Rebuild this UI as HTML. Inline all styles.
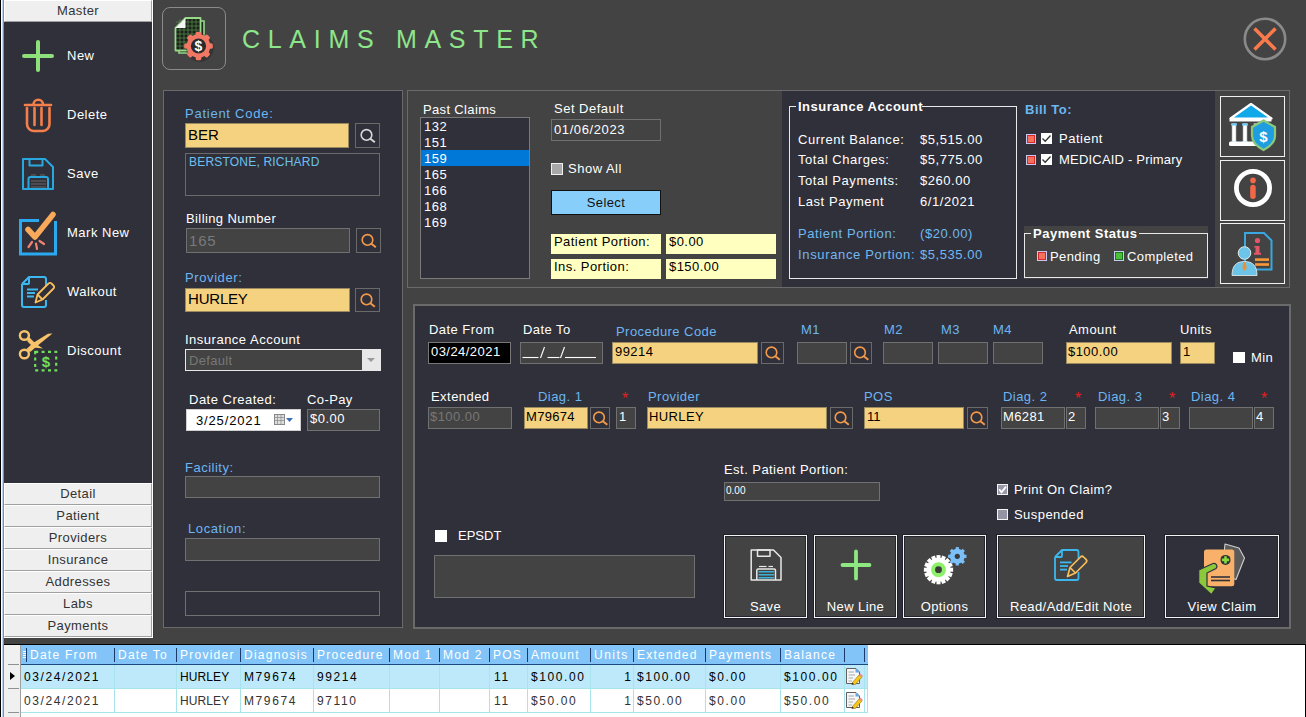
<!DOCTYPE html><html><head><meta charset="utf-8"><style>
html,body{margin:0;padding:0;}
body{width:1306px;height:717px;overflow:hidden;background:#434343;position:relative;font-family:"Liberation Sans",sans-serif;}
.a{position:absolute;box-sizing:border-box;}
.t{white-space:nowrap;}
</style></head><body>
<div class="a" style="left:0px;top:0px;width:1px;height:717px;background:#000;"></div>
<div class="a" style="left:1px;top:0px;width:1px;height:717px;background:#fdfdfd;"></div>
<div class="a" style="left:2px;top:0px;width:1px;height:717px;background:#bcd4ee;"></div>
<div class="a" style="left:3px;top:0px;width:1px;height:717px;background:#8c8c8c;"></div>
<div class="a" style="left:4px;top:0px;width:148px;height:22px;background:#efefef;border-top:1px solid #fff;border-left:1px solid #fff;border-right:1px solid #a0a0a0;border-bottom:1px solid #a0a0a0;"></div>
<div class="a t" style="left:4px;top:4px;font-size:13px;line-height:13px;color:#333;font-family:'Liberation Sans',sans-serif;letter-spacing:0.4px;width:148px;text-align:center;">Master</div>
<div class="a" style="left:4px;top:22px;width:148px;height:461px;background:#30303a;"></div>
<div class="a" style="left:152px;top:0px;width:1px;height:638px;background:#fff;"></div>
<div class="a" style="left:153px;top:0px;width:1px;height:638px;background:#3a3a3a;"></div>
<div class="a" style="left:4px;top:483px;width:148px;height:22px;background:#efefef;border-top:1px solid #fff;border-left:1px solid #fff;border-right:1px solid #a0a0a0;border-bottom:1px solid #a0a0a0;"></div>
<div class="a t" style="left:4px;top:487px;font-size:13px;line-height:13px;color:#333;font-family:'Liberation Sans',sans-serif;letter-spacing:0.4px;width:148px;text-align:center;">Detail</div>
<div class="a" style="left:4px;top:505px;width:148px;height:22px;background:#efefef;border-top:1px solid #fff;border-left:1px solid #fff;border-right:1px solid #a0a0a0;border-bottom:1px solid #a0a0a0;"></div>
<div class="a t" style="left:4px;top:509px;font-size:13px;line-height:13px;color:#333;font-family:'Liberation Sans',sans-serif;letter-spacing:0.4px;width:148px;text-align:center;">Patient</div>
<div class="a" style="left:4px;top:527px;width:148px;height:22px;background:#efefef;border-top:1px solid #fff;border-left:1px solid #fff;border-right:1px solid #a0a0a0;border-bottom:1px solid #a0a0a0;"></div>
<div class="a t" style="left:4px;top:531px;font-size:13px;line-height:13px;color:#333;font-family:'Liberation Sans',sans-serif;letter-spacing:0.4px;width:148px;text-align:center;">Providers</div>
<div class="a" style="left:4px;top:549px;width:148px;height:22px;background:#efefef;border-top:1px solid #fff;border-left:1px solid #fff;border-right:1px solid #a0a0a0;border-bottom:1px solid #a0a0a0;"></div>
<div class="a t" style="left:4px;top:553px;font-size:13px;line-height:13px;color:#333;font-family:'Liberation Sans',sans-serif;letter-spacing:0.4px;width:148px;text-align:center;">Insurance</div>
<div class="a" style="left:4px;top:571px;width:148px;height:22px;background:#efefef;border-top:1px solid #fff;border-left:1px solid #fff;border-right:1px solid #a0a0a0;border-bottom:1px solid #a0a0a0;"></div>
<div class="a t" style="left:4px;top:575px;font-size:13px;line-height:13px;color:#333;font-family:'Liberation Sans',sans-serif;letter-spacing:0.4px;width:148px;text-align:center;">Addresses</div>
<div class="a" style="left:4px;top:593px;width:148px;height:22px;background:#efefef;border-top:1px solid #fff;border-left:1px solid #fff;border-right:1px solid #a0a0a0;border-bottom:1px solid #a0a0a0;"></div>
<div class="a t" style="left:4px;top:597px;font-size:13px;line-height:13px;color:#333;font-family:'Liberation Sans',sans-serif;letter-spacing:0.4px;width:148px;text-align:center;">Labs</div>
<div class="a" style="left:4px;top:615px;width:148px;height:22px;background:#efefef;border-top:1px solid #fff;border-left:1px solid #fff;border-right:1px solid #a0a0a0;border-bottom:1px solid #a0a0a0;"></div>
<div class="a t" style="left:4px;top:619px;font-size:13px;line-height:13px;color:#333;font-family:'Liberation Sans',sans-serif;letter-spacing:0.4px;width:148px;text-align:center;">Payments</div>
<div class="a" style="left:4px;top:637px;width:149px;height:1px;background:#fff;"></div>
<div class="a t" style="left:67px;top:49px;font-size:13px;line-height:13px;color:#fff;font-family:'Liberation Sans',sans-serif;letter-spacing:0.5px;">New</div>
<div class="a t" style="left:67px;top:108px;font-size:13px;line-height:13px;color:#fff;font-family:'Liberation Sans',sans-serif;letter-spacing:0.5px;">Delete</div>
<div class="a t" style="left:67px;top:167px;font-size:13px;line-height:13px;color:#fff;font-family:'Liberation Sans',sans-serif;letter-spacing:0.5px;">Save</div>
<div class="a t" style="left:67px;top:226px;font-size:13px;line-height:13px;color:#fff;font-family:'Liberation Sans',sans-serif;letter-spacing:0.5px;">Mark New</div>
<div class="a t" style="left:67px;top:285px;font-size:13px;line-height:13px;color:#fff;font-family:'Liberation Sans',sans-serif;letter-spacing:0.5px;">Walkout</div>
<div class="a t" style="left:67px;top:344px;font-size:13px;line-height:13px;color:#fff;font-family:'Liberation Sans',sans-serif;letter-spacing:0.5px;">Discount</div>
<svg class="a" style="left:0;top:0" width="70" height="380" viewBox="0 0 70 380">
<g stroke="#8ee07a" stroke-width="4" stroke-linecap="round"><line x1="24" y1="56" x2="52" y2="56"/><line x1="38" y1="42" x2="38" y2="70"/></g>
<g stroke="#f47f4b" stroke-width="2.6" fill="none" stroke-linecap="round">
<line x1="25" y1="105" x2="51" y2="105"/><path d="M33.5 104.5 a4.5 4.5 0 0 1 9.5 0"/>
<path d="M27 108 V124 a6.5 7 0 0 0 6.5 7 h9.5 a6.5 7 0 0 0 6.5 -7 V108"/>
<line x1="34.5" y1="108" x2="34.5" y2="125"/><line x1="41.5" y1="108" x2="41.5" y2="125"/></g>
<g stroke="#29a8e0" stroke-width="2" fill="none" stroke-linejoin="round">
<path d="M23 159 H45 L53 167 V189 H23 Z"/><rect x="29.5" y="159" width="13" height="6.5"/><path d="M28.5 189 V179 a2 2 0 0 1 2 -2 H46 a2 2 0 0 1 2 2 V189"/></g>
<g stroke="#666" stroke-width="1"><line x1="31" y1="181" x2="46" y2="181"/><line x1="31" y1="184" x2="46" y2="184"/><line x1="31" y1="187" x2="46" y2="187"/><line x1="31" y1="175" x2="36" y2="175"/><line x1="40" y1="175" x2="45" y2="175"/></g>
<path d="M39 220.5 H20.5 V254 H55.5 V221" stroke="#2aa8f0" stroke-width="3" fill="none"/>
<polyline points="28,229.5 35,237 53,214.5" stroke="#f9a95a" stroke-width="5.5" fill="none" stroke-linecap="round" stroke-linejoin="round"/>
<g stroke="#f08474" stroke-width="2.2" stroke-linecap="round"><line x1="32" y1="242" x2="28.5" y2="247"/><line x1="36" y1="243.5" x2="37" y2="249"/><line x1="39.5" y1="241" x2="44" y2="244"/></g>
<g stroke="#3cb8ee" stroke-width="2" fill="none" stroke-linejoin="round">
<path d="M22 284 L29 277 H44 a2 2 0 0 1 2 2 V286 M46 300 V305 a2 2 0 0 1 -2 2 H24 a2 2 0 0 1 -2 -2 V284"/><path d="M22 284 H28 a1 1 0 0 0 1 -1 V277"/>
<line x1="27" y1="289.5" x2="38" y2="289.5"/><line x1="27" y1="293" x2="35" y2="293"/><line x1="27" y1="296.5" x2="34" y2="296.5"/></g>
<g stroke="#f8bf5c" stroke-width="1.8" fill="none" stroke-linejoin="round">
<path d="M35.5 302.5 L37.5 294.5 L48.5 283.5 a2 2 0 0 1 3 0 L53.5 285.5 a2 2 0 0 1 0 3 L42.5 299.5 Z"/><line x1="37.5" y1="294.5" x2="42.5" y2="299.5"/></g>
<g stroke="#f8c26a" fill="none" stroke-width="2.4"><ellipse cx="24.4" cy="335.5" rx="4.5" ry="4.3"/><ellipse cx="24.4" cy="354" rx="4.5" ry="4.3"/></g>
<path d="M27 338.5 L29.5 337.5 L35.5 343.5 L43 348.6 L33.5 347.6 L27.5 341.5 Z" fill="#f8c26a"/>
<path d="M27.5 351.5 L26.5 349 L33 343 L48 333.8 L52.5 333.6 L36.5 346.5 L30.5 351.8 Z" fill="#f8c26a"/>
<rect x="35.2" y="351.8" width="21" height="18.6" stroke="#6ee05a" stroke-width="2.2" fill="none" stroke-dasharray="3 3.4"/>
<text x="45.8" y="367" font-family="Liberation Sans" font-weight="bold" font-size="15" fill="#6ee05a" text-anchor="middle">$</text>
</svg>
<div class="a" style="left:162px;top:7px;width:64px;height:63px;border:1px solid #8a8a8a;border-radius:8px;box-sizing:border-box"></div>
<svg class="a" style="left:160px;top:5px" width="70" height="70" viewBox="160 5 70 70">
<path d="M189 21 H204 V53 H179 V31 Z" fill="#202820" stroke="#98d888" stroke-width="1.6"/>
<path d="M185.5 18 H200.5 V50.5 H175.5 V28 Z" fill="#1a221a" stroke="#98d888" stroke-width="1.8" stroke-linejoin="round"/>
<g stroke="#5a9050" stroke-width="0.7"><line x1="180" y1="19" x2="180" y2="50" /><line x1="184" y1="19" x2="184" y2="50" /><line x1="188" y1="19" x2="188" y2="50" /><line x1="192" y1="19" x2="192" y2="50" /><line x1="196" y1="19" x2="196" y2="50" /><line x1="176" y1="22" x2="200" y2="22" /><line x1="176" y1="26" x2="200" y2="26" /><line x1="176" y1="30" x2="200" y2="30" /><line x1="176" y1="34" x2="200" y2="34" /><line x1="176" y1="38" x2="200" y2="38" /><line x1="176" y1="42" x2="200" y2="42" /><line x1="176" y1="46" x2="200" y2="46" /></g>
<path d="M175.5 28 L185.5 18 V28 Z" fill="#f4f4f4"/>
<g transform="translate(198.5,46)">
<circle r="14" fill="#000" opacity="0.22" transform="translate(1.2,1.8)"/>
<circle r="11.8" fill="#f07864"/>
<g fill="#f07864"><rect x="-2.8" y="-14.3" width="5.6" height="5" rx="1.6" transform="rotate(0)"/><rect x="-2.8" y="-14.3" width="5.6" height="5" rx="1.6" transform="rotate(45)"/><rect x="-2.8" y="-14.3" width="5.6" height="5" rx="1.6" transform="rotate(90)"/><rect x="-2.8" y="-14.3" width="5.6" height="5" rx="1.6" transform="rotate(135)"/><rect x="-2.8" y="-14.3" width="5.6" height="5" rx="1.6" transform="rotate(180)"/><rect x="-2.8" y="-14.3" width="5.6" height="5" rx="1.6" transform="rotate(225)"/><rect x="-2.8" y="-14.3" width="5.6" height="5" rx="1.6" transform="rotate(270)"/><rect x="-2.8" y="-14.3" width="5.6" height="5" rx="1.6" transform="rotate(315)"/></g>
<circle r="7.6" fill="#2a2a2a"/>
<text x="0" y="5" font-family="Liberation Sans" font-weight="bold" font-size="14" fill="#fff" text-anchor="middle">$</text>
</g></svg>
<div class="a t" style="left:242px;top:27px;font-size:25px;line-height:25px;color:#8de68a;font-family:'Liberation Sans',sans-serif;letter-spacing:7.7px;">CLAIMS MASTER</div>
<svg class="a" style="left:1240px;top:14px" width="50" height="50" viewBox="1240 14 50 50">
<circle cx="1265" cy="39" r="20.2" stroke="#8a8a8a" stroke-width="2.6" fill="none"/>
<g stroke="#fb7a4c" stroke-width="3.6"><line x1="1254.5" y1="28.5" x2="1275.5" y2="49.5"/><line x1="1275.5" y1="28.5" x2="1254.5" y2="49.5"/></g></svg>
<div class="a" style="left:163px;top:90px;width:240px;height:538px;background:#30303a;border:1px solid #6a6a6a;"></div>
<div class="a t" style="left:185px;top:107px;font-size:13px;line-height:13px;color:#6cb6f2;font-family:'Liberation Sans',sans-serif;letter-spacing:0.75px;">Patient Code:</div>
<div class="a" style="left:185px;top:123px;width:164px;height:25px;background:#f5d27f;border:1px solid #9a8a60;"></div>
<div class="a t" style="left:188px;top:127px;font-size:15px;line-height:15px;color:#000;font-family:'Liberation Sans',sans-serif;">BER</div>
<div class="a" style="left:355px;top:123px;width:25px;height:25px;background:#30303a;border:1px solid #6a6a6a;"></div>
<svg class="a" style="left:355px;top:123px" width="25" height="25"><g transform="translate(11.5,11.9)" stroke="#d8d8d8" fill="none"><circle cx="0" cy="0" r="5.3" stroke-width="1.6"/><line x1="3.9" y1="3.9" x2="8.3" y2="7.4" stroke-width="2"/></g></svg>
<div class="a" style="left:185px;top:153px;width:195px;height:43px;background:#30303a;border:1px solid #6a6a6a;"></div>
<div class="a t" style="left:189px;top:156px;font-size:12px;line-height:12px;color:#6cc0f0;font-family:'Liberation Sans',sans-serif;letter-spacing:0.2px;">BERSTONE, RICHARD</div>
<div class="a t" style="left:186px;top:212px;font-size:13px;line-height:13px;color:#fff;font-family:'Liberation Sans',sans-serif;letter-spacing:0.4px;">Billing Number</div>
<div class="a" style="left:186px;top:228px;width:164px;height:25px;background:#434343;border:1px solid #707070;"></div>
<div class="a t" style="left:189px;top:233px;font-size:15px;line-height:15px;color:#7a7a7a;font-family:'Liberation Sans',sans-serif;letter-spacing:0.8px;">165</div>
<div class="a" style="left:356px;top:228px;width:25px;height:25px;background:#30303a;border:1px solid #6a6a6a;"></div>
<svg class="a" style="left:356px;top:228px" width="25" height="25"><g transform="translate(11.5,11.9)" stroke="#f39a4a" fill="none"><circle cx="0" cy="0" r="5.3" stroke-width="1.6"/><line x1="3.9" y1="3.9" x2="8.3" y2="7.4" stroke-width="2"/></g></svg>
<div class="a t" style="left:185px;top:271px;font-size:13px;line-height:13px;color:#6cb6f2;font-family:'Liberation Sans',sans-serif;letter-spacing:0.6px;">Provider:</div>
<div class="a" style="left:185px;top:288px;width:165px;height:24px;background:#f5d27f;border:1px solid #9a8a60;"></div>
<div class="a t" style="left:188px;top:291px;font-size:15px;line-height:15px;color:#000;font-family:'Liberation Sans',sans-serif;letter-spacing:-0.2px;">HURLEY</div>
<div class="a" style="left:355px;top:288px;width:25px;height:24px;background:#30303a;border:1px solid #6a6a6a;"></div>
<svg class="a" style="left:355px;top:288px" width="25" height="24"><g transform="translate(11.5,11.4)" stroke="#f39a4a" fill="none"><circle cx="0" cy="0" r="5.3" stroke-width="1.6"/><line x1="3.9" y1="3.9" x2="8.3" y2="7.4" stroke-width="2"/></g></svg>
<div class="a t" style="left:185px;top:333px;font-size:13px;line-height:13px;color:#fff;font-family:'Liberation Sans',sans-serif;letter-spacing:0.5px;">Insurance Account</div>
<div class="a" style="left:185px;top:349px;width:196px;height:22px;background:#434343;border:1px solid #e8e8e8;"></div>
<div class="a" style="left:362px;top:350px;width:18px;height:20px;background:#e8e8e8;"></div>
<div class="a" style="left:367px;top:358px;width:0;height:0;border-left:4px solid transparent;border-right:4px solid transparent;border-top:4px solid #999"></div>
<div class="a t" style="left:189px;top:354px;font-size:13px;line-height:13px;color:#777;font-family:'Liberation Sans',sans-serif;letter-spacing:0.3px;">Default</div>
<div class="a t" style="left:189px;top:393px;font-size:13px;line-height:13px;color:#fff;font-family:'Liberation Sans',sans-serif;letter-spacing:0.5px;">Date Created:</div>
<div class="a t" style="left:307px;top:393px;font-size:13px;line-height:13px;color:#fff;font-family:'Liberation Sans',sans-serif;letter-spacing:0.4px;">Co-Pay</div>
<div class="a" style="left:186px;top:409px;width:115px;height:22px;background:#fff;border:1px solid #d0d0d0;"></div>
<div class="a t" style="left:196px;top:414px;font-size:13px;line-height:13px;color:#000;font-family:'Liberation Sans',sans-serif;letter-spacing:0.85px;">3/25/2021</div>
<svg class="a" style="left:272px;top:412px" width="26" height="16"><rect x="2.5" y="2.5" width="10" height="10" fill="#ddd" stroke="#888"/><g stroke="#888" stroke-width="0.7"><line x1="2.5" y1="5.5" x2="12.5" y2="5.5"/><line x1="2.5" y1="8.5" x2="12.5" y2="8.5"/><line x1="5.5" y1="2.5" x2="5.5" y2="12.5"/><line x1="9" y1="2.5" x2="9" y2="12.5"/></g><path d="M14 6 h7 l-3.5 4 z" fill="#3a6ec0"/></svg>
<div class="a" style="left:307px;top:409px;width:73px;height:22px;background:#434343;border:1px solid #707070;"></div>
<div class="a t" style="left:310px;top:412px;font-size:13px;line-height:13px;color:#fff;font-family:'Liberation Sans',sans-serif;letter-spacing:0.5px;">$0.00</div>
<div class="a t" style="left:185px;top:461px;font-size:13px;line-height:13px;color:#6cb6f2;font-family:'Liberation Sans',sans-serif;letter-spacing:0.5px;">Facility:</div>
<div class="a" style="left:185px;top:476px;width:195px;height:22px;background:#434343;border:1px solid #707070;"></div>
<div class="a t" style="left:188px;top:522px;font-size:13px;line-height:13px;color:#6cb6f2;font-family:'Liberation Sans',sans-serif;letter-spacing:0.6px;">Location:</div>
<div class="a" style="left:185px;top:538px;width:195px;height:23px;background:#434343;border:1px solid #707070;"></div>
<div class="a" style="left:185px;top:591px;width:195px;height:25px;background:#30303a;border:1px solid #707070;"></div>
<div class="a" style="left:407px;top:90px;width:376px;height:198px;background:#434343;border:1px solid #6a6a6a;"></div>
<div class="a t" style="left:423px;top:103px;font-size:13px;line-height:13px;color:#fff;font-family:'Liberation Sans',sans-serif;letter-spacing:0.35px;">Past Claims</div>
<div class="a" style="left:420px;top:117px;width:110px;height:162px;background:#30303a;border:1px solid #7a7a7a;"></div>
<div class="a" style="left:421px;top:150px;width:108px;height:16px;background:#0078d7;"></div>
<div class="a t" style="left:424px;top:120px;font-size:13px;line-height:13px;color:#fff;font-family:'Liberation Sans',sans-serif;letter-spacing:0.5px;">132</div>
<div class="a t" style="left:424px;top:136px;font-size:13px;line-height:13px;color:#fff;font-family:'Liberation Sans',sans-serif;letter-spacing:0.5px;">151</div>
<div class="a t" style="left:424px;top:152px;font-size:13px;line-height:13px;color:#fff;font-family:'Liberation Sans',sans-serif;letter-spacing:0.5px;">159</div>
<div class="a t" style="left:424px;top:168px;font-size:13px;line-height:13px;color:#fff;font-family:'Liberation Sans',sans-serif;letter-spacing:0.5px;">165</div>
<div class="a t" style="left:424px;top:184px;font-size:13px;line-height:13px;color:#fff;font-family:'Liberation Sans',sans-serif;letter-spacing:0.5px;">166</div>
<div class="a t" style="left:424px;top:200px;font-size:13px;line-height:13px;color:#fff;font-family:'Liberation Sans',sans-serif;letter-spacing:0.5px;">168</div>
<div class="a t" style="left:424px;top:216px;font-size:13px;line-height:13px;color:#fff;font-family:'Liberation Sans',sans-serif;letter-spacing:0.5px;">169</div>
<div class="a t" style="left:554px;top:102px;font-size:13px;line-height:13px;color:#fff;font-family:'Liberation Sans',sans-serif;letter-spacing:0.5px;">Set Default</div>
<div class="a" style="left:551px;top:119px;width:110px;height:22px;background:#434343;border:1px solid #707070;"></div>
<div class="a t" style="left:554px;top:123px;font-size:13px;line-height:13px;color:#fff;font-family:'Liberation Sans',sans-serif;letter-spacing:0.6px;">01/06/2023</div>
<div class="a" style="left:551px;top:163px;width:12px;height:12px;background:#a8a8a8;border:1px solid #f0f0f0;"></div>
<div class="a t" style="left:568px;top:162px;font-size:13px;line-height:13px;color:#fff;font-family:'Liberation Sans',sans-serif;letter-spacing:0.5px;">Show All</div>
<div class="a" style="left:551px;top:190px;width:110px;height:25px;background:#87cefa;border:1px solid #111;"></div>
<div class="a t" style="left:551px;top:196px;font-size:13px;line-height:13px;color:#111;font-family:'Liberation Sans',sans-serif;letter-spacing:0.4px;width:110px;text-align:center;">Select</div>
<div class="a" style="left:551px;top:234px;width:110px;height:20px;background:#ffffc0;"></div>
<div class="a t" style="left:554px;top:235px;font-size:13px;line-height:13px;color:#000;font-family:'Liberation Sans',sans-serif;letter-spacing:0.45px;">Patient Portion:</div>
<div class="a" style="left:666px;top:234px;width:110px;height:20px;background:#ffffc0;"></div>
<div class="a t" style="left:669px;top:235px;font-size:13px;line-height:13px;color:#000;font-family:'Liberation Sans',sans-serif;letter-spacing:0.45px;">$0.00</div>
<div class="a" style="left:551px;top:259px;width:110px;height:20px;background:#ffffc0;"></div>
<div class="a t" style="left:554px;top:260px;font-size:13px;line-height:13px;color:#000;font-family:'Liberation Sans',sans-serif;letter-spacing:0.45px;">Ins. Portion:</div>
<div class="a" style="left:666px;top:259px;width:110px;height:20px;background:#ffffc0;"></div>
<div class="a t" style="left:669px;top:260px;font-size:13px;line-height:13px;color:#000;font-family:'Liberation Sans',sans-serif;letter-spacing:0.45px;">$150.00</div>
<div class="a" style="left:782px;top:90px;width:508px;height:198px;background:#434343;border:1px solid #6a6a6a;border-left:none;"></div>
<div class="a" style="left:782px;top:91px;width:433px;height:196px;background:#30303a;"></div>
<div class="a" style="left:789px;top:106px;width:228px;height:173px;background:transparent;border:1px solid #e8e8e8;"></div>
<div class="a" style="left:796px;top:98px;width:126px;height:15px;background:#30303a;"></div>
<div class="a t" style="left:798px;top:100px;font-size:13px;line-height:13px;color:#fff;font-family:'Liberation Sans',sans-serif;font-weight:bold;letter-spacing:0.5px;">Insurance Account</div>
<div class="a t" style="left:798px;top:133px;font-size:13px;line-height:13px;color:#fff;font-family:'Liberation Sans',sans-serif;letter-spacing:0.55px;">Current Balance:</div>
<div class="a t" style="left:920px;top:133px;font-size:13px;line-height:13px;color:#fff;font-family:'Liberation Sans',sans-serif;letter-spacing:0.55px;">$5,515.00</div>
<div class="a t" style="left:798px;top:153px;font-size:13px;line-height:13px;color:#fff;font-family:'Liberation Sans',sans-serif;letter-spacing:0.55px;">Total Charges:</div>
<div class="a t" style="left:920px;top:153px;font-size:13px;line-height:13px;color:#fff;font-family:'Liberation Sans',sans-serif;letter-spacing:0.55px;">$5,775.00</div>
<div class="a t" style="left:798px;top:174px;font-size:13px;line-height:13px;color:#fff;font-family:'Liberation Sans',sans-serif;letter-spacing:0.55px;">Total Payments:</div>
<div class="a t" style="left:920px;top:174px;font-size:13px;line-height:13px;color:#fff;font-family:'Liberation Sans',sans-serif;letter-spacing:0.55px;">$260.00</div>
<div class="a t" style="left:798px;top:195px;font-size:13px;line-height:13px;color:#fff;font-family:'Liberation Sans',sans-serif;letter-spacing:0.55px;">Last Payment</div>
<div class="a t" style="left:920px;top:195px;font-size:13px;line-height:13px;color:#fff;font-family:'Liberation Sans',sans-serif;letter-spacing:0.55px;">6/1/2021</div>
<div class="a t" style="left:798px;top:227px;font-size:13px;line-height:13px;color:#70b8f0;font-family:'Liberation Sans',sans-serif;letter-spacing:0.6px;">Patient Portion:</div>
<div class="a t" style="left:920px;top:227px;font-size:13px;line-height:13px;color:#70b8f0;font-family:'Liberation Sans',sans-serif;letter-spacing:0.55px;">($20.00)</div>
<div class="a t" style="left:798px;top:248px;font-size:13px;line-height:13px;color:#70b8f0;font-family:'Liberation Sans',sans-serif;letter-spacing:0.65px;">Insurance Portion:</div>
<div class="a t" style="left:920px;top:248px;font-size:13px;line-height:13px;color:#70b8f0;font-family:'Liberation Sans',sans-serif;letter-spacing:0.55px;">$5,535.00</div>
<div class="a t" style="left:1025px;top:103px;font-size:13px;line-height:13px;color:#6cb6f2;font-family:'Liberation Sans',sans-serif;font-weight:bold;letter-spacing:0.5px;">Bill To:</div>
<div class="a" style="left:1026px;top:134px;width:10px;height:10px;background:#e8d0d8;border:1px solid #c8c8f0;"></div>
<div class="a" style="left:1027px;top:135px;width:8px;height:8px;background:#f4715c;border:1px solid #d82828;"></div>
<div class="a" style="left:1026px;top:155px;width:10px;height:10px;background:#e8d0d8;border:1px solid #c8c8f0;"></div>
<div class="a" style="left:1027px;top:156px;width:8px;height:8px;background:#f4715c;border:1px solid #d82828;"></div>
<div class="a" style="left:1041px;top:133px;width:11px;height:11px;background:#fff;border:1px solid #fff;"></div>
<svg class="a" style="left:1041px;top:133px" width="11" height="11"><polyline points="1.5,5.5 4.2,8.3 9.5,2.5" stroke="#333" stroke-width="1.3" fill="none"/></svg>
<div class="a" style="left:1041px;top:154px;width:11px;height:11px;background:#fff;border:1px solid #fff;"></div>
<svg class="a" style="left:1041px;top:154px" width="11" height="11"><polyline points="1.5,5.5 4.2,8.3 9.5,2.5" stroke="#333" stroke-width="1.3" fill="none"/></svg>
<div class="a t" style="left:1059px;top:132px;font-size:13px;line-height:13px;color:#fff;font-family:'Liberation Sans',sans-serif;letter-spacing:0.5px;">Patient</div>
<div class="a t" style="left:1059px;top:153px;font-size:13px;line-height:13px;color:#fff;font-family:'Liberation Sans',sans-serif;letter-spacing:0.2px;">MEDICAID - Primary</div>
<div class="a" style="left:1024px;top:226px;width:184px;height:53px;background:#434343;"></div>
<div class="a" style="left:1024px;top:233px;width:184px;height:45px;background:transparent;border:1px solid #e8e8e8;"></div>
<div class="a" style="left:1031px;top:226px;width:108px;height:15px;background:#434343;"></div>
<div class="a t" style="left:1033px;top:227px;font-size:13px;line-height:13px;color:#fff;font-family:'Liberation Sans',sans-serif;font-weight:bold;letter-spacing:0.5px;">Payment Status</div>
<div class="a" style="left:1037px;top:251px;width:10px;height:10px;background:#e8d0d8;border:1px solid #c8c8f0;"></div>
<div class="a" style="left:1038px;top:252px;width:8px;height:8px;background:#f4715c;border:1px solid #d82828;"></div>
<div class="a t" style="left:1050px;top:250px;font-size:13px;line-height:13px;color:#fff;font-family:'Liberation Sans',sans-serif;letter-spacing:0.4px;">Pending</div>
<div class="a" style="left:1114px;top:251px;width:10px;height:10px;background:#e0e8e0;border:1px solid #c8c8f0;"></div>
<div class="a" style="left:1115px;top:252px;width:8px;height:8px;background:#48c038;border:1px solid #1a7a1a;"></div>
<div class="a t" style="left:1127px;top:250px;font-size:13px;line-height:13px;color:#fff;font-family:'Liberation Sans',sans-serif;letter-spacing:0.4px;">Completed</div>
<div class="a" style="left:1220px;top:96px;width:65px;height:61px;background:transparent;border:1.5px solid #f0f0f0;"></div>
<div class="a" style="left:1220px;top:160px;width:65px;height:61px;background:transparent;border:1.5px solid #f0f0f0;"></div>
<div class="a" style="left:1220px;top:223px;width:65px;height:61px;background:transparent;border:1.5px solid #f0f0f0;"></div>
<svg class="a" style="left:1220px;top:96px" width="65" height="188" viewBox="1220 96 65 188">
<path d="M1251 104 L1271.5 118.5 H1230.5 Z" fill="#10a8e8" stroke="#fff" stroke-width="2.2" stroke-linejoin="round"/>
<rect x="1229.5" y="118.5" width="42" height="3" fill="#fff"/>
<rect x="1232" y="123.5" width="4" height="20" fill="#fff" stroke="#aaa" stroke-width="0.6"/><rect x="1243" y="123.5" width="4" height="20" fill="#fff" stroke="#aaa" stroke-width="0.6"/><rect x="1254" y="123.5" width="4" height="20" fill="#fff" stroke="#aaa" stroke-width="0.6"/>
<rect x="1231" y="123.5" width="6" height="2" fill="#6cc8f0"/><rect x="1242" y="123.5" width="6" height="2" fill="#6cc8f0"/><rect x="1231" y="141.5" width="6" height="2" fill="#6cc8f0"/><rect x="1242" y="141.5" width="6" height="2" fill="#6cc8f0"/>
<rect x="1229" y="141.5" width="36" height="4.5" rx="1.5" fill="#fff"/>
<path d="M1263.5 120.5 L1275 127 V136 C1275 143 1269 147 1263.5 150 C1258 147 1252 143 1252 136 V127 Z" fill="#1e9ee0" stroke="#8cc87a" stroke-width="2.2"/>
<text x="1263.5" y="142" font-family="Liberation Sans" font-weight="bold" font-size="15" fill="#fff" text-anchor="middle">$</text>
<circle cx="1253" cy="188" r="16.6" stroke="#fff" stroke-width="4.8" fill="none"/>
<circle cx="1253" cy="180.4" r="2.8" fill="#f06848"/><rect x="1250.2" y="184.7" width="5.5" height="14.3" rx="2.75" fill="#f06848"/>
<path d="M1245 233 H1264 L1271.5 240.5 V269.5 H1245 Z" fill="none" stroke="#3aa8e0" stroke-width="2"/>
<circle cx="1257.5" cy="240.5" r="2.6" fill="#e05868"/><rect x="1255.5" y="246" width="4" height="8" fill="#e05868"/><rect x="1254.3" y="246" width="4.5" height="1.6" fill="#e05868"/><rect x="1254" y="252.8" width="7" height="2" fill="#e05868"/>
<rect x="1255" y="258.3" width="14" height="2.6" fill="#f89838"/><rect x="1255" y="263.2" width="14" height="2.6" fill="#f89838"/>
<path d="M1232 275.5 C1232 266 1236 261.5 1244.5 261.5 C1253 261.5 1257 266 1257 275.5 Z" fill="#6cc4e8" stroke="#f0f0f0" stroke-width="0.8"/>
<circle cx="1244.5" cy="253" r="6.3" fill="#6cc4e8" stroke="#f0f0f0" stroke-width="0.9"/>
<path d="M1243.3 262 H1245.7 L1246.6 268 L1244.5 271 L1242.4 268 Z" fill="#f09030"/>
</svg>
<div class="a" style="left:413px;top:304px;width:878px;height:325px;background:#30303a;border:2px solid #6a6a6a;"></div>
<div class="a t" style="left:429px;top:323px;font-size:13px;line-height:13px;color:#fff;font-family:'Liberation Sans',sans-serif;letter-spacing:0.45px;">Date From</div>
<div class="a t" style="left:523px;top:323px;font-size:13px;line-height:13px;color:#fff;font-family:'Liberation Sans',sans-serif;letter-spacing:0.45px;">Date To</div>
<div class="a t" style="left:616px;top:325px;font-size:13px;line-height:13px;color:#6cb6f2;font-family:'Liberation Sans',sans-serif;letter-spacing:0.45px;">Procedure Code</div>
<div class="a t" style="left:801px;top:323px;font-size:13px;line-height:13px;color:#6cb6f2;font-family:'Liberation Sans',sans-serif;letter-spacing:0.45px;">M1</div>
<div class="a t" style="left:884px;top:323px;font-size:13px;line-height:13px;color:#6cb6f2;font-family:'Liberation Sans',sans-serif;letter-spacing:0.45px;">M2</div>
<div class="a t" style="left:941px;top:323px;font-size:13px;line-height:13px;color:#6cb6f2;font-family:'Liberation Sans',sans-serif;letter-spacing:0.45px;">M3</div>
<div class="a t" style="left:993px;top:323px;font-size:13px;line-height:13px;color:#6cb6f2;font-family:'Liberation Sans',sans-serif;letter-spacing:0.45px;">M4</div>
<div class="a t" style="left:1069px;top:323px;font-size:13px;line-height:13px;color:#fff;font-family:'Liberation Sans',sans-serif;letter-spacing:0.45px;">Amount</div>
<div class="a t" style="left:1180px;top:323px;font-size:13px;line-height:13px;color:#fff;font-family:'Liberation Sans',sans-serif;letter-spacing:0.45px;">Units</div>
<div class="a" style="left:428px;top:342px;width:83px;height:22px;background:#000;border:1px solid #777;"></div>
<div class="a t" style="left:431px;top:345px;font-size:13px;line-height:13px;color:#fff;font-family:'Liberation Sans',sans-serif;letter-spacing:0.45px;">03/24/2021</div>
<div class="a" style="left:520px;top:342px;width:83px;height:22px;background:#434343;border:1px solid #707070;"></div>
<svg class="a" style="left:520px;top:342px" width="83" height="22"><g stroke="#fff" stroke-width="1.1"><line x1="2.5" y1="15.5" x2="18.5" y2="15.5"/><line x1="27.5" y1="15.5" x2="39.5" y2="15.5"/><line x1="45" y1="15.5" x2="76" y2="15.5"/><line x1="20.5" y1="16" x2="24.5" y2="5"/><line x1="40.5" y1="16" x2="44.5" y2="5"/></g></svg>
<div class="a" style="left:612px;top:342px;width:146px;height:22px;background:#f5d27f;border:1px solid #9a8a60;"></div>
<div class="a t" style="left:615px;top:345px;font-size:13px;line-height:13px;color:#000;font-family:'Liberation Sans',sans-serif;letter-spacing:0.45px;">99214</div>
<div class="a" style="left:761px;top:342px;width:23px;height:22px;background:#30303a;border:1px solid #6a6a6a;"></div>
<svg class="a" style="left:761px;top:342px" width="23" height="22"><g transform="translate(10.5,10.4)" stroke="#f39a4a" fill="none"><circle cx="0" cy="0" r="5.3" stroke-width="1.6"/><line x1="3.9" y1="3.9" x2="8.3" y2="7.4" stroke-width="2"/></g></svg>
<div class="a" style="left:797px;top:342px;width:50px;height:22px;background:#434343;border:1px solid #707070;"></div>
<div class="a" style="left:850px;top:342px;width:22px;height:22px;background:#30303a;border:1px solid #6a6a6a;"></div>
<svg class="a" style="left:850px;top:342px" width="22" height="22"><g transform="translate(10.0,10.4)" stroke="#f39a4a" fill="none"><circle cx="0" cy="0" r="5.3" stroke-width="1.6"/><line x1="3.9" y1="3.9" x2="8.3" y2="7.4" stroke-width="2"/></g></svg>
<div class="a" style="left:883px;top:342px;width:50px;height:22px;background:#434343;border:1px solid #707070;"></div>
<div class="a" style="left:938px;top:342px;width:50px;height:22px;background:#434343;border:1px solid #707070;"></div>
<div class="a" style="left:993px;top:342px;width:50px;height:22px;background:#434343;border:1px solid #707070;"></div>
<div class="a" style="left:1066px;top:342px;width:106px;height:22px;background:#f5d27f;border:1px solid #9a8a60;"></div>
<div class="a t" style="left:1068px;top:345px;font-size:13px;line-height:13px;color:#000;font-family:'Liberation Sans',sans-serif;letter-spacing:0.45px;">$100.00</div>
<div class="a" style="left:1180px;top:342px;width:35px;height:22px;background:#f5d27f;border:1px solid #9a8a60;"></div>
<div class="a t" style="left:1183px;top:345px;font-size:13px;line-height:13px;color:#000;font-family:'Liberation Sans',sans-serif;">1</div>
<div class="a" style="left:1233px;top:352px;width:12px;height:11px;background:#fff;"></div>
<div class="a t" style="left:1251px;top:351px;font-size:13px;line-height:13px;color:#fff;font-family:'Liberation Sans',sans-serif;letter-spacing:0.45px;">Min</div>
<div class="a t" style="left:431px;top:390px;font-size:13px;line-height:13px;color:#fff;font-family:'Liberation Sans',sans-serif;letter-spacing:0.45px;">Extended</div>
<div class="a t" style="left:538px;top:390px;font-size:13px;line-height:13px;color:#6cb6f2;font-family:'Liberation Sans',sans-serif;letter-spacing:0.45px;">Diag. 1</div>
<div class="a t" style="left:648px;top:390px;font-size:13px;line-height:13px;color:#6cb6f2;font-family:'Liberation Sans',sans-serif;letter-spacing:0.45px;">Provider</div>
<div class="a t" style="left:864px;top:390px;font-size:13px;line-height:13px;color:#6cb6f2;font-family:'Liberation Sans',sans-serif;letter-spacing:0.45px;">POS</div>
<div class="a t" style="left:1003px;top:390px;font-size:13px;line-height:13px;color:#6cb6f2;font-family:'Liberation Sans',sans-serif;letter-spacing:0.45px;">Diag. 2</div>
<div class="a t" style="left:1098px;top:390px;font-size:13px;line-height:13px;color:#6cb6f2;font-family:'Liberation Sans',sans-serif;letter-spacing:0.45px;">Diag. 3</div>
<div class="a t" style="left:1191px;top:390px;font-size:13px;line-height:13px;color:#6cb6f2;font-family:'Liberation Sans',sans-serif;letter-spacing:0.45px;">Diag. 4</div>
<div class="a t" style="left:622px;top:391px;font-size:16px;line-height:16px;color:#e02020;font-family:'Liberation Sans',sans-serif;">*</div>
<div class="a t" style="left:1075px;top:391px;font-size:16px;line-height:16px;color:#e02020;font-family:'Liberation Sans',sans-serif;">*</div>
<div class="a t" style="left:1169px;top:391px;font-size:16px;line-height:16px;color:#e02020;font-family:'Liberation Sans',sans-serif;">*</div>
<div class="a t" style="left:1261px;top:391px;font-size:16px;line-height:16px;color:#e02020;font-family:'Liberation Sans',sans-serif;">*</div>
<div class="a" style="left:428px;top:407px;width:84px;height:22px;background:#434343;border:1px solid #707070;"></div>
<div class="a t" style="left:430px;top:410px;font-size:13px;line-height:13px;color:#777;font-family:'Liberation Sans',sans-serif;letter-spacing:0.45px;">$100.00</div>
<div class="a" style="left:524px;top:407px;width:64px;height:22px;background:#f5d27f;border:1px solid #9a8a60;"></div>
<div class="a t" style="left:526px;top:410px;font-size:13px;line-height:13px;color:#000;font-family:'Liberation Sans',sans-serif;letter-spacing:0.3px;">M79674</div>
<div class="a" style="left:590px;top:407px;width:20px;height:22px;background:#30303a;border:1px solid #6a6a6a;"></div>
<svg class="a" style="left:590px;top:407px" width="20" height="22"><g transform="translate(9.0,10.4)" stroke="#f39a4a" fill="none"><circle cx="0" cy="0" r="5.3" stroke-width="1.6"/><line x1="3.9" y1="3.9" x2="8.3" y2="7.4" stroke-width="2"/></g></svg>
<div class="a" style="left:616px;top:407px;width:20px;height:22px;background:#434343;border:1px solid #707070;"></div>
<div class="a t" style="left:619px;top:410px;font-size:13px;line-height:13px;color:#fff;font-family:'Liberation Sans',sans-serif;">1</div>
<div class="a" style="left:647px;top:407px;width:180px;height:22px;background:#f5d27f;border:1px solid #9a8a60;"></div>
<div class="a t" style="left:649px;top:410px;font-size:13px;line-height:13px;color:#000;font-family:'Liberation Sans',sans-serif;letter-spacing:0.4px;">HURLEY</div>
<div class="a" style="left:830px;top:407px;width:23px;height:22px;background:#30303a;border:1px solid #6a6a6a;"></div>
<svg class="a" style="left:830px;top:407px" width="23" height="22"><g transform="translate(10.5,10.4)" stroke="#f39a4a" fill="none"><circle cx="0" cy="0" r="5.3" stroke-width="1.6"/><line x1="3.9" y1="3.9" x2="8.3" y2="7.4" stroke-width="2"/></g></svg>
<div class="a" style="left:864px;top:407px;width:100px;height:22px;background:#f5d27f;border:1px solid #9a8a60;"></div>
<div class="a t" style="left:867px;top:410px;font-size:13px;line-height:13px;color:#000;font-family:'Liberation Sans',sans-serif;">11</div>
<div class="a" style="left:967px;top:407px;width:21px;height:22px;background:#30303a;border:1px solid #6a6a6a;"></div>
<svg class="a" style="left:967px;top:407px" width="21" height="22"><g transform="translate(9.5,10.4)" stroke="#f39a4a" fill="none"><circle cx="0" cy="0" r="5.3" stroke-width="1.6"/><line x1="3.9" y1="3.9" x2="8.3" y2="7.4" stroke-width="2"/></g></svg>
<div class="a" style="left:1001px;top:407px;width:64px;height:22px;background:#434343;border:1px solid #707070;"></div>
<div class="a t" style="left:1003px;top:410px;font-size:13px;line-height:13px;color:#fff;font-family:'Liberation Sans',sans-serif;letter-spacing:0.4px;">M6281</div>
<div class="a" style="left:1066px;top:407px;width:20px;height:22px;background:#434343;border:1px solid #707070;"></div>
<div class="a t" style="left:1068px;top:410px;font-size:13px;line-height:13px;color:#fff;font-family:'Liberation Sans',sans-serif;">2</div>
<div class="a" style="left:1095px;top:407px;width:64px;height:22px;background:#434343;border:1px solid #707070;"></div>
<div class="a" style="left:1160px;top:407px;width:20px;height:22px;background:#434343;border:1px solid #707070;"></div>
<div class="a t" style="left:1162px;top:410px;font-size:13px;line-height:13px;color:#fff;font-family:'Liberation Sans',sans-serif;">3</div>
<div class="a" style="left:1189px;top:407px;width:64px;height:22px;background:#434343;border:1px solid #707070;"></div>
<div class="a" style="left:1254px;top:407px;width:20px;height:22px;background:#434343;border:1px solid #707070;"></div>
<div class="a t" style="left:1256px;top:410px;font-size:13px;line-height:13px;color:#fff;font-family:'Liberation Sans',sans-serif;">4</div>
<div class="a t" style="left:724px;top:463px;font-size:13px;line-height:13px;color:#fff;font-family:'Liberation Sans',sans-serif;letter-spacing:0.45px;">Est. Patient Portion:</div>
<div class="a" style="left:724px;top:482px;width:156px;height:19px;background:#434343;border:1px solid #707070;"></div>
<div class="a t" style="left:726px;top:486px;font-size:10px;line-height:10px;color:#fff;font-family:'Liberation Sans',sans-serif;">0.00</div>
<div class="a" style="left:997px;top:484px;width:11px;height:11px;background:#9898a8;border:1px solid #f4f4f4;"></div>
<svg class="a" style="left:997px;top:484px" width="11" height="11"><polyline points="2.2,5.3 4.5,8.2 9,2.6" stroke="#fff" stroke-width="1.8" fill="none"/></svg>
<div class="a t" style="left:1014px;top:483px;font-size:13px;line-height:13px;color:#fff;font-family:'Liberation Sans',sans-serif;letter-spacing:0.45px;">Print On Claim?</div>
<div class="a" style="left:997px;top:509px;width:11px;height:11px;background:#9494a4;border:1px solid #f4f4f4;"></div>
<div class="a t" style="left:1014px;top:508px;font-size:13px;line-height:13px;color:#fff;font-family:'Liberation Sans',sans-serif;letter-spacing:0.45px;">Suspended</div>
<div class="a" style="left:435px;top:530px;width:12px;height:12px;background:#fff;"></div>
<div class="a t" style="left:458px;top:529px;font-size:13px;line-height:13px;color:#fff;font-family:'Liberation Sans',sans-serif;">EPSDT</div>
<div class="a" style="left:434px;top:555px;width:261px;height:43px;background:#434343;border:1px solid #707070;"></div>
<div class="a" style="left:724px;top:535px;width:83px;height:83px;background:#434343;border:1.3px solid #f4f4f4;box-shadow:0 0 0 1px #202028, inset 0 0 0 1px #252530;"></div>
<div class="a t" style="left:724px;top:600px;font-size:13px;line-height:13px;color:#fff;font-family:'Liberation Sans',sans-serif;letter-spacing:0.4px;width:83px;text-align:center;">Save</div>
<div class="a" style="left:814px;top:535px;width:83px;height:83px;background:#434343;border:1.3px solid #f4f4f4;box-shadow:0 0 0 1px #202028, inset 0 0 0 1px #252530;"></div>
<div class="a t" style="left:814px;top:600px;font-size:13px;line-height:13px;color:#fff;font-family:'Liberation Sans',sans-serif;letter-spacing:0.4px;width:83px;text-align:center;">New Line</div>
<div class="a" style="left:903px;top:535px;width:83px;height:83px;background:#434343;border:1.3px solid #f4f4f4;box-shadow:0 0 0 1px #202028, inset 0 0 0 1px #252530;"></div>
<div class="a t" style="left:903px;top:600px;font-size:13px;line-height:13px;color:#fff;font-family:'Liberation Sans',sans-serif;letter-spacing:0.4px;width:83px;text-align:center;">Options</div>
<div class="a" style="left:997px;top:535px;width:148px;height:83px;background:#434343;border:1.3px solid #f4f4f4;box-shadow:0 0 0 1px #202028, inset 0 0 0 1px #252530;"></div>
<div class="a t" style="left:997px;top:600px;font-size:13px;line-height:13px;color:#fff;font-family:'Liberation Sans',sans-serif;letter-spacing:0.4px;width:148px;text-align:center;">Read/Add/Edit Note</div>
<div class="a" style="left:1165px;top:535px;width:114px;height:83px;background:#30303a;border:1.3px solid #f4f4f4;box-shadow:0 0 0 1px #202028, inset 0 0 0 1px #252530;"></div>
<div class="a t" style="left:1165px;top:600px;font-size:13px;line-height:13px;color:#fff;font-family:'Liberation Sans',sans-serif;letter-spacing:0.4px;width:114px;text-align:center;">View Claim</div>
<svg class="a" style="left:724px;top:535px" width="560" height="70" viewBox="724 535 560 70">
<g stroke="#e8e8e8" stroke-width="1.5" fill="none" stroke-linejoin="round"><path d="M751.2 550 H773.5 L781 557.5 V580 H751.2 Z"/><rect x="757.5" y="550" width="12.5" height="6.3"/><path d="M756.8 580 V570.5 a1.5 1.5 0 0 1 1.5 -1.5 H774 a1.5 1.5 0 0 1 1.5 1.5 V580"/></g>
<g stroke="#3cc8f0" stroke-width="1.3"><line x1="758.5" y1="571.8" x2="774" y2="571.8"/><line x1="758.5" y1="574.8" x2="774" y2="574.8"/><line x1="758.5" y1="577.8" x2="774" y2="577.8"/></g>
<g stroke="#e8e8e8" stroke-width="1.2"><line x1="759" y1="566.5" x2="766.5" y2="566.5"/><line x1="768.5" y1="566.5" x2="773" y2="566.5"/></g>
<g stroke="#8ee882" stroke-width="3.8" stroke-linecap="round"><line x1="842.5" y1="565" x2="869.5" y2="565"/><line x1="856" y1="551.5" x2="856" y2="578.5"/></g>
<g transform="translate(938.5,569.7)" fill="#fff"><circle r="12"/><rect x="-2" y="-14.6" width="4" height="5" transform="rotate(0.0)"/><rect x="-2" y="-14.6" width="4" height="5" transform="rotate(22.5)"/><rect x="-2" y="-14.6" width="4" height="5" transform="rotate(45.0)"/><rect x="-2" y="-14.6" width="4" height="5" transform="rotate(67.5)"/><rect x="-2" y="-14.6" width="4" height="5" transform="rotate(90.0)"/><rect x="-2" y="-14.6" width="4" height="5" transform="rotate(112.5)"/><rect x="-2" y="-14.6" width="4" height="5" transform="rotate(135.0)"/><rect x="-2" y="-14.6" width="4" height="5" transform="rotate(157.5)"/><rect x="-2" y="-14.6" width="4" height="5" transform="rotate(180.0)"/><rect x="-2" y="-14.6" width="4" height="5" transform="rotate(202.5)"/><rect x="-2" y="-14.6" width="4" height="5" transform="rotate(225.0)"/><rect x="-2" y="-14.6" width="4" height="5" transform="rotate(247.5)"/><rect x="-2" y="-14.6" width="4" height="5" transform="rotate(270.0)"/><rect x="-2" y="-14.6" width="4" height="5" transform="rotate(292.5)"/><rect x="-2" y="-14.6" width="4" height="5" transform="rotate(315.0)"/><rect x="-2" y="-14.6" width="4" height="5" transform="rotate(337.5)"/><circle r="7.4" fill="#8cf068"/><circle r="3.4" fill="#3a3a3a"/></g>
<g transform="translate(957.3,556.3)" fill="#7cc0f8"><circle r="7.5"/><rect x="-1.6" y="-9.2" width="3.2" height="4" transform="rotate(0)"/><rect x="-1.6" y="-9.2" width="3.2" height="4" transform="rotate(45)"/><rect x="-1.6" y="-9.2" width="3.2" height="4" transform="rotate(90)"/><rect x="-1.6" y="-9.2" width="3.2" height="4" transform="rotate(135)"/><rect x="-1.6" y="-9.2" width="3.2" height="4" transform="rotate(180)"/><rect x="-1.6" y="-9.2" width="3.2" height="4" transform="rotate(225)"/><rect x="-1.6" y="-9.2" width="3.2" height="4" transform="rotate(270)"/><rect x="-1.6" y="-9.2" width="3.2" height="4" transform="rotate(315)"/><circle r="2.6" fill="#3a3a3a"/></g>
<g stroke="#3cb8ee" stroke-width="1.8" fill="none" stroke-linejoin="round"><path d="M1055 557 L1062 550 H1076.5 a2 2 0 0 1 2 2 V558.5 M1078.5 572 V578 a2 2 0 0 1 -2 2 H1057 a2 2 0 0 1 -2 -2 V557"/><path d="M1055 557 H1061 a1 1 0 0 0 1 -1 V550"/><line x1="1060" y1="562.4" x2="1071.5" y2="562.4"/><line x1="1060" y1="566" x2="1068" y2="566"/><line x1="1060" y1="569.6" x2="1067" y2="569.6"/></g>
<g stroke="#f8bf5c" stroke-width="1.7" fill="none" stroke-linejoin="round"><path d="M1067.5 576.5 L1070 567.5 L1080.5 557 a2.2 2.2 0 0 1 3.1 0 L1086 559.4 a2.2 2.2 0 0 1 0 3.1 L1075.5 573 Z"/><line x1="1070" y1="567.5" x2="1075.5" y2="573"/></g>
<path d="M1225 544 L1239 548 L1244.5 558 L1236 579.5 L1222 575 Z" fill="#5a5a5a" stroke="#d0d0d0" stroke-width="1.1" stroke-linejoin="round"/>
<rect x="1204" y="549.6" width="30.3" height="36.7" rx="2.5" fill="#f8b06a"/>
<path d="M1198.7 570 L1213 563.5 a3 3 0 0 1 3 5 L1207 573 V586 L1216 588 L1211.4 594.6 L1198.7 583 Z" fill="#8cc83c" stroke="#30303a" stroke-width="1.2"/>
<circle cx="1225.5" cy="559.9" r="5" fill="#30303a"/><path d="M1225.5 556.3 V563.5 M1221.9 559.9 H1229.1" stroke="#8cd840" stroke-width="2.6"/>
<g stroke="#30303a" stroke-width="1.6"><line x1="1211" y1="577" x2="1230" y2="577"/><line x1="1211" y1="580.5" x2="1230" y2="580.5"/></g>
</svg>
<div class="a" style="left:4px;top:645px;width:1301px;height:72px;background:#fff;"></div>
<div class="a" style="left:1305px;top:644px;width:1px;height:73px;background:#000;"></div>
<div class="a" style="left:4px;top:644px;width:1302px;height:1px;background:#000;"></div>
<div class="a" style="left:4px;top:645px;width:17px;height:72px;background:#f0f0f0;"></div>
<div class="a" style="left:20px;top:645px;width:1px;height:72px;background:#a0a0a0;"></div>
<div class="a" style="left:8px;top:664px;width:11px;height:1px;background:#909090;"></div>
<div class="a" style="left:8px;top:688px;width:11px;height:1px;background:#909090;"></div>
<div class="a" style="left:8px;top:712px;width:11px;height:1px;background:#909090;"></div>
<div class="a" style="left:10px;top:672px;width:0;height:0;border-top:4px solid transparent;border-bottom:4px solid transparent;border-left:5px solid #000"></div>
<div class="a" style="left:21px;top:645px;width:847px;height:19px;background:#82c4f8;"></div>
<div class="a" style="left:21px;top:664px;width:847px;height:1px;background:#1a4a80;"></div>
<div class="a" style="left:21px;top:665px;width:847px;height:24px;background:#bde9fb;"></div>
<div class="a" style="left:21px;top:689px;width:847px;height:24px;background:#fff;"></div>
<div class="a" style="left:21px;top:688px;width:847px;height:1px;background:#a8e4ec;"></div>
<div class="a" style="left:21px;top:712px;width:847px;height:1px;background:#a8e4ec;"></div>
<div class="a" style="left:114px;top:648px;width:1px;height:14px;background:#1a3a6a;"></div>
<div class="a" style="left:114px;top:665px;width:1px;height:48px;background:#a8e4ec;"></div>
<div class="a" style="left:176px;top:648px;width:1px;height:14px;background:#1a3a6a;"></div>
<div class="a" style="left:176px;top:665px;width:1px;height:48px;background:#a8e4ec;"></div>
<div class="a" style="left:240px;top:648px;width:1px;height:14px;background:#1a3a6a;"></div>
<div class="a" style="left:240px;top:665px;width:1px;height:48px;background:#a8e4ec;"></div>
<div class="a" style="left:313px;top:648px;width:1px;height:14px;background:#1a3a6a;"></div>
<div class="a" style="left:313px;top:665px;width:1px;height:48px;background:#a8e4ec;"></div>
<div class="a" style="left:389px;top:648px;width:1px;height:14px;background:#1a3a6a;"></div>
<div class="a" style="left:389px;top:665px;width:1px;height:48px;background:#a8e4ec;"></div>
<div class="a" style="left:439px;top:648px;width:1px;height:14px;background:#1a3a6a;"></div>
<div class="a" style="left:439px;top:665px;width:1px;height:48px;background:#a8e4ec;"></div>
<div class="a" style="left:489px;top:648px;width:1px;height:14px;background:#1a3a6a;"></div>
<div class="a" style="left:489px;top:665px;width:1px;height:48px;background:#a8e4ec;"></div>
<div class="a" style="left:527px;top:648px;width:1px;height:14px;background:#1a3a6a;"></div>
<div class="a" style="left:527px;top:665px;width:1px;height:48px;background:#a8e4ec;"></div>
<div class="a" style="left:590px;top:648px;width:1px;height:14px;background:#1a3a6a;"></div>
<div class="a" style="left:590px;top:665px;width:1px;height:48px;background:#a8e4ec;"></div>
<div class="a" style="left:633px;top:648px;width:1px;height:14px;background:#1a3a6a;"></div>
<div class="a" style="left:633px;top:665px;width:1px;height:48px;background:#a8e4ec;"></div>
<div class="a" style="left:705px;top:648px;width:1px;height:14px;background:#1a3a6a;"></div>
<div class="a" style="left:705px;top:665px;width:1px;height:48px;background:#a8e4ec;"></div>
<div class="a" style="left:780px;top:648px;width:1px;height:14px;background:#1a3a6a;"></div>
<div class="a" style="left:780px;top:665px;width:1px;height:48px;background:#a8e4ec;"></div>
<div class="a" style="left:844px;top:648px;width:1px;height:14px;background:#1a3a6a;"></div>
<div class="a" style="left:844px;top:665px;width:1px;height:48px;background:#a8e4ec;"></div>
<div class="a" style="left:864px;top:648px;width:1px;height:14px;background:#1a3a6a;"></div>
<div class="a" style="left:864px;top:665px;width:1px;height:48px;background:#a8e4ec;"></div>
<div class="a" style="left:867px;top:665px;width:1px;height:48px;background:#a8e4ec;"></div>
<div class="a" style="left:23px;top:651px;width:3px;height:8px;background:repeating-linear-gradient(#fff 0 1px,transparent 1px 2px)"></div>
<div class="a" style="left:26px;top:648px;width:1px;height:14px;background:#1a3a6a;"></div>
<div class="a t" style="left:30px;top:649px;font-size:12px;line-height:12px;color:#fff;font-family:'Liberation Sans',sans-serif;letter-spacing:1.25px;">Date From</div>
<div class="a t" style="left:118px;top:649px;font-size:12px;line-height:12px;color:#fff;font-family:'Liberation Sans',sans-serif;letter-spacing:1.25px;">Date To</div>
<div class="a t" style="left:180px;top:649px;font-size:12px;line-height:12px;color:#fff;font-family:'Liberation Sans',sans-serif;letter-spacing:1.25px;">Provider</div>
<div class="a t" style="left:244px;top:649px;font-size:12px;line-height:12px;color:#fff;font-family:'Liberation Sans',sans-serif;letter-spacing:1.25px;">Diagnosis</div>
<div class="a t" style="left:317px;top:649px;font-size:12px;line-height:12px;color:#fff;font-family:'Liberation Sans',sans-serif;letter-spacing:1.25px;">Procedure</div>
<div class="a t" style="left:393px;top:649px;font-size:12px;line-height:12px;color:#fff;font-family:'Liberation Sans',sans-serif;letter-spacing:1.25px;">Mod 1</div>
<div class="a t" style="left:443px;top:649px;font-size:12px;line-height:12px;color:#fff;font-family:'Liberation Sans',sans-serif;letter-spacing:1.25px;">Mod 2</div>
<div class="a t" style="left:493px;top:649px;font-size:12px;line-height:12px;color:#fff;font-family:'Liberation Sans',sans-serif;letter-spacing:1.25px;">POS</div>
<div class="a t" style="left:531px;top:649px;font-size:12px;line-height:12px;color:#fff;font-family:'Liberation Sans',sans-serif;letter-spacing:1.25px;">Amount</div>
<div class="a t" style="left:637px;top:649px;font-size:12px;line-height:12px;color:#fff;font-family:'Liberation Sans',sans-serif;letter-spacing:1.25px;">Extended</div>
<div class="a t" style="left:709px;top:649px;font-size:12px;line-height:12px;color:#fff;font-family:'Liberation Sans',sans-serif;letter-spacing:1.25px;">Payments</div>
<div class="a t" style="left:784px;top:649px;font-size:12px;line-height:12px;color:#fff;font-family:'Liberation Sans',sans-serif;letter-spacing:1.25px;">Balance</div>
<div class="a t" style="left:594px;top:649px;font-size:12px;line-height:12px;color:#fff;font-family:'Liberation Sans',sans-serif;letter-spacing:1.5px;">Units</div>
<div class="a t" style="left:24px;top:671px;font-size:12px;line-height:12px;color:#000;font-family:'Liberation Sans',sans-serif;letter-spacing:1.6px;">03/24/2021</div>
<div class="a t" style="left:180px;top:671px;font-size:12px;line-height:12px;color:#000;font-family:'Liberation Sans',sans-serif;letter-spacing:0.1px;">HURLEY</div>
<div class="a t" style="left:244px;top:671px;font-size:12px;line-height:12px;color:#000;font-family:'Liberation Sans',sans-serif;letter-spacing:1.6px;">M79674</div>
<div class="a t" style="left:317px;top:671px;font-size:12px;line-height:12px;color:#000;font-family:'Liberation Sans',sans-serif;letter-spacing:1.6px;">99214</div>
<div class="a t" style="left:494px;top:671px;font-size:12px;line-height:12px;color:#000;font-family:'Liberation Sans',sans-serif;letter-spacing:1.6px;">11</div>
<div class="a t" style="left:531px;top:671px;font-size:12px;line-height:12px;color:#000;font-family:'Liberation Sans',sans-serif;letter-spacing:1.6px;">$100.00</div>
<div class="a t" style="left:591px;top:671px;font-size:12px;line-height:12px;color:#000;font-family:'Liberation Sans',sans-serif;width:40px;text-align:right;">1</div>
<div class="a t" style="left:637px;top:671px;font-size:12px;line-height:12px;color:#000;font-family:'Liberation Sans',sans-serif;letter-spacing:1.6px;">$100.00</div>
<div class="a t" style="left:709px;top:671px;font-size:12px;line-height:12px;color:#000;font-family:'Liberation Sans',sans-serif;letter-spacing:1.6px;">$0.00</div>
<div class="a t" style="left:784px;top:671px;font-size:12px;line-height:12px;color:#000;font-family:'Liberation Sans',sans-serif;letter-spacing:1.6px;">$100.00</div>
<svg class="a" style="left:845px;top:667px" width="18" height="18"><path d="M1.5 1.5 H11 L14.5 5 V16.5 H1.5 Z" fill="#f6f6f6" stroke="#606060"/><path d="M10.5 1.5 L14.5 5.5 H10.5 Z" fill="#5aa8f0"/><g stroke="#b8b8b8" stroke-width="1.2"><line x1="3.5" y1="5" x2="9" y2="5"/><line x1="3.5" y1="8" x2="10" y2="8"/><line x1="3.5" y1="11" x2="8" y2="11"/><line x1="3.5" y1="14" x2="7" y2="14"/></g><path d="M7.2 15.8 L14.2 7.8 L16.8 10.2 L9.8 18 Z" fill="#f8c818" stroke="#8a6a10" stroke-width="0.6"/><path d="M14.2 7.8 L15.5 6.5 L18 9 L16.8 10.2 Z" fill="#f08a90"/><path d="M7.2 15.8 L6.5 17.8 L9 17.5 Z" fill="#222"/></svg>
<div class="a t" style="left:24px;top:695px;font-size:12px;line-height:12px;color:#333;font-family:'Liberation Sans',sans-serif;letter-spacing:1.6px;">03/24/2021</div>
<div class="a t" style="left:180px;top:695px;font-size:12px;line-height:12px;color:#333;font-family:'Liberation Sans',sans-serif;letter-spacing:0.1px;">HURLEY</div>
<div class="a t" style="left:244px;top:695px;font-size:12px;line-height:12px;color:#333;font-family:'Liberation Sans',sans-serif;letter-spacing:1.6px;">M79674</div>
<div class="a t" style="left:317px;top:695px;font-size:12px;line-height:12px;color:#333;font-family:'Liberation Sans',sans-serif;letter-spacing:1.6px;">97110</div>
<div class="a t" style="left:494px;top:695px;font-size:12px;line-height:12px;color:#333;font-family:'Liberation Sans',sans-serif;letter-spacing:1.6px;">11</div>
<div class="a t" style="left:531px;top:695px;font-size:12px;line-height:12px;color:#333;font-family:'Liberation Sans',sans-serif;letter-spacing:1.6px;">$50.00</div>
<div class="a t" style="left:591px;top:695px;font-size:12px;line-height:12px;color:#333;font-family:'Liberation Sans',sans-serif;width:40px;text-align:right;">1</div>
<div class="a t" style="left:637px;top:695px;font-size:12px;line-height:12px;color:#333;font-family:'Liberation Sans',sans-serif;letter-spacing:1.6px;">$50.00</div>
<div class="a t" style="left:709px;top:695px;font-size:12px;line-height:12px;color:#333;font-family:'Liberation Sans',sans-serif;letter-spacing:1.6px;">$0.00</div>
<div class="a t" style="left:784px;top:695px;font-size:12px;line-height:12px;color:#333;font-family:'Liberation Sans',sans-serif;letter-spacing:1.6px;">$50.00</div>
<svg class="a" style="left:845px;top:691px" width="18" height="18"><path d="M1.5 1.5 H11 L14.5 5 V16.5 H1.5 Z" fill="#f6f6f6" stroke="#606060"/><path d="M10.5 1.5 L14.5 5.5 H10.5 Z" fill="#5aa8f0"/><g stroke="#b8b8b8" stroke-width="1.2"><line x1="3.5" y1="5" x2="9" y2="5"/><line x1="3.5" y1="8" x2="10" y2="8"/><line x1="3.5" y1="11" x2="8" y2="11"/><line x1="3.5" y1="14" x2="7" y2="14"/></g><path d="M7.2 15.8 L14.2 7.8 L16.8 10.2 L9.8 18 Z" fill="#f8c818" stroke="#8a6a10" stroke-width="0.6"/><path d="M14.2 7.8 L15.5 6.5 L18 9 L16.8 10.2 Z" fill="#f08a90"/><path d="M7.2 15.8 L6.5 17.8 L9 17.5 Z" fill="#222"/></svg>
</body></html>
